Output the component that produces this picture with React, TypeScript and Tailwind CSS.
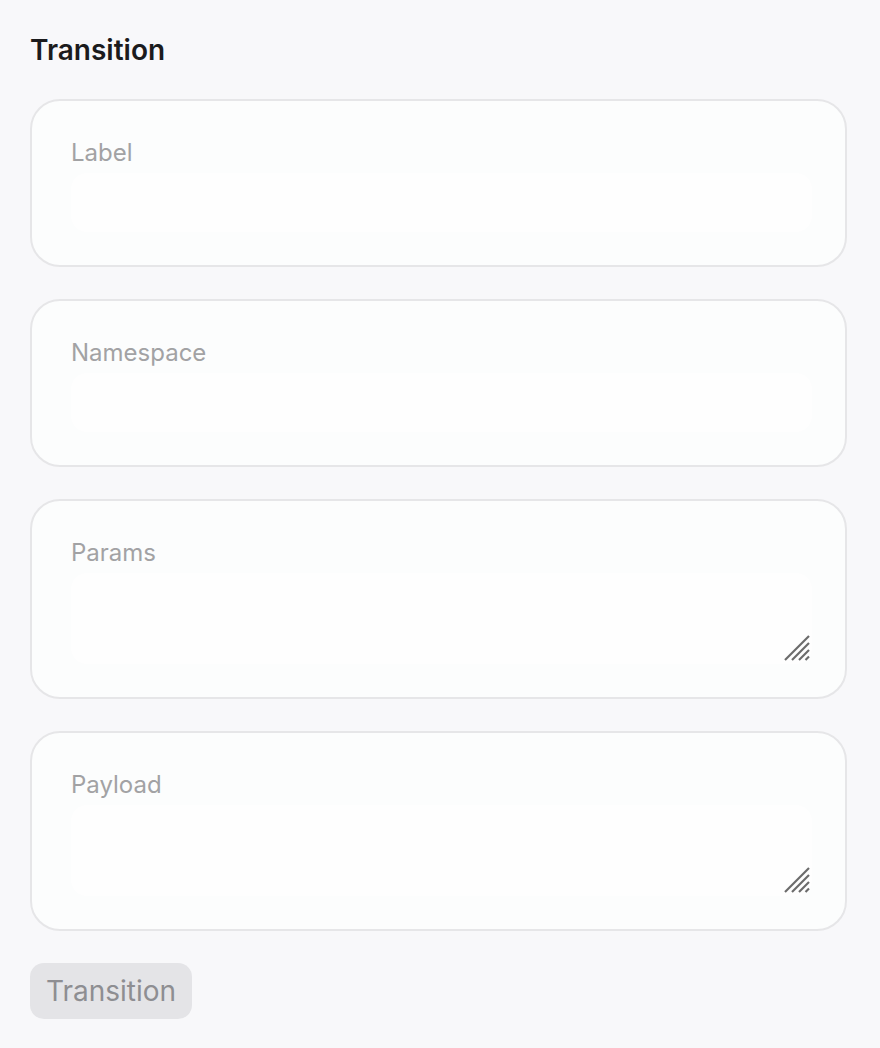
import { useState } from 'react';

const FONT = { fontFamily: 'Inter, "Noto Sans", sans-serif' };

function ResizeGrip() {
  return (
    <svg
      aria-hidden
      width="26"
      height="26"
      viewBox="0 0 26 26"
      className="pointer-events-none absolute bottom-[3px] right-[2px]"
    >
      <g stroke="#6b6b6b" strokeWidth="2.2">
        <line x1="1" y1="25" x2="25" y2="1" />
        <line x1="8" y1="25" x2="25" y2="8" />
        <line x1="15" y1="25" x2="25" y2="15" />
        <line x1="21.5" y1="25" x2="25" y2="21.5" />
      </g>
    </svg>
  );
}

function Field({
  label,
  multiline = false,
}: {
  label: string;
  multiline?: boolean;
}) {
  const [value, setValue] = useState('');
  return (
    <div className="rounded-[30px] border-2 border-[#e6e6e8] bg-[#fcfdfd] pb-[33px] pl-[39px] pr-[33px] pt-[37px]">
      <label className="block text-[24px] leading-[30px] text-[#a2a2a4]">
        {label}
      </label>
      {multiline ? (
        <div className="relative mt-[5px]">
          <textarea
            value={value}
            onChange={(e) => setValue(e.currentTarget.value)}
            className="block h-[91px] w-full resize-none rounded-[16px] bg-[#fefefe] px-4 py-3 text-[22px] outline-none"
          />
          <ResizeGrip />
        </div>
      ) : (
        <input
          value={value}
          onChange={(e) => setValue(e.currentTarget.value)}
          className="mt-[5px] block h-[59px] w-full rounded-[16px] bg-[#fefefe] px-4 text-[22px] outline-none"
        />
      )}
    </div>
  );
}

export default function App() {
  return (
    <div className="min-h-[1048px] bg-[#f8f8fa] px-[30px] pt-[33px]" style={FONT}>
      <h2 className="text-[28px] font-semibold leading-[34px] text-[#1b1b1d]">
        Transition
      </h2>
      <div className="mt-[32px] flex w-[817px] flex-col gap-[32px]">
        <Field label="Label" />
        <Field label="Namespace" />
        <Field label="Params" multiline />
        <Field label="Payload" multiline />
      </div>
      <button
        type="button"
        disabled
        className="mt-[32px] h-[56px] rounded-[14px] bg-[#e4e4e7] px-[16px] text-[28px] text-[#8e8e92]"
      >
        Transition
      </button>
    </div>
  );
}
